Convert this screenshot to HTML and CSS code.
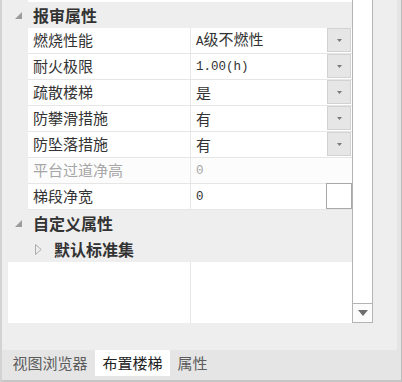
FILE: index.html
```html
<!DOCTYPE html>
<html lang="zh-CN">
<head>
    <meta charset="UTF-8">
    <title>属性</title>
    <link rel="stylesheet" href="styles.css">
</head>
<body>
<div class="window">
    <div class="panel">
        <div class="grid">
            <div class="cut"></div>
            <div class="group">
                <svg class="open" width="7" height="7" viewBox="0 0 7 7"><polygon points="7,0 7,7 0,7"/></svg>
                <span class="group-title">报审属性</span>
            </div>
            <div class="row">
                <div class="name">燃烧性能</div>
                <div class="value"><span><span class="num">A</span>级不燃性</span><span class="drop"><svg width="5" height="3" viewBox="0 0 5 3"><polygon points="0,0 5,0 2.5,3"/></svg></span></div>
            </div>
            <div class="row">
                <div class="name">耐火极限</div>
                <div class="value"><span class="num">1.00(h)</span><span class="drop"><svg width="5" height="3" viewBox="0 0 5 3"><polygon points="0,0 5,0 2.5,3"/></svg></span></div>
            </div>
            <div class="row">
                <div class="name">疏散楼梯</div>
                <div class="value"><span>是</span><span class="drop"><svg width="5" height="3" viewBox="0 0 5 3"><polygon points="0,0 5,0 2.5,3"/></svg></span></div>
            </div>
            <div class="row">
                <div class="name">防攀滑措施</div>
                <div class="value"><span>有</span><span class="drop"><svg width="5" height="3" viewBox="0 0 5 3"><polygon points="0,0 5,0 2.5,3"/></svg></span></div>
            </div>
            <div class="row">
                <div class="name">防坠落措施</div>
                <div class="value"><span>有</span><span class="drop"><svg width="5" height="3" viewBox="0 0 5 3"><polygon points="0,0 5,0 2.5,3"/></svg></span></div>
            </div>
            <div class="row disabled">
                <div class="name">平台过道净高</div>
                <div class="value"><span class="num">0</span></div>
            </div>
            <div class="row">
                <div class="name">梯段净宽</div>
                <div class="value"><span class="num">0</span><span class="edit"></span></div>
            </div>
            <div class="group">
                <svg class="open" width="7" height="7" viewBox="0 0 7 7"><polygon points="7,0 7,7 0,7"/></svg>
                <span class="group-title">自定义属性</span>
            </div>
            <div class="subgroup">
                <svg class="closed" width="7" height="11" viewBox="0 0 7 11"><polygon points="0.5,0.5 6.2,5.5 0.5,10.5"/></svg>
                <span class="group-title">默认标准集</span>
            </div>
            <div class="blank">
                <div class="blank-name"></div>
            </div>
        </div>
        <div class="scrollbar">
            <div class="track"></div>
            <div class="arrow"><svg width="10" height="6" viewBox="0 0 10 6"><polygon points="0,0 10,0 5,6"/></svg></div>
        </div>
    </div>
    <div class="tabs">
        <div class="tab">视图浏览器</div>
        <div class="tab active">布置楼梯</div>
        <div class="tab">属性</div>
    </div>
</div>
</body>
</html>
```

FILE: styles.css
```css
*{
    margin:0;
    padding:0;
    box-sizing:border-box;
}
body{
    font-family:"Noto Sans CJK SC", "Microsoft YaHei", sans-serif;
    background:#e5e5e5;
}
.window{
    width:402px;
    height:382px;
    display:flex;
    flex-direction:column;
    background:#e5e5e5;
    border-left:2px solid #d3d3d3;
    border-right:1px solid #bcbcbc;
    border-bottom:2px solid #c6c6c6;
}
.panel{
    height:350px;
    margin-right:4px;
    padding-bottom:27px;
    background:#eeeeee;
    display:flex;
    align-items:flex-start;
}
.grid{
    width:350px;
    height:323px;
    display:flex;
    flex-direction:column;
    overflow:hidden;
}
.cut{
    height:2px;
    margin-left:26px;
    background:#fff;
    flex:none;
}
.group, .subgroup{
    height:26px;
    flex:none;
    display:flex;
    align-items:center;
    color:#333;
}
.group{
    padding-left:13px;
}
.subgroup{
    padding-left:33px;
}
.group-title{
    font-size:16px;
    font-weight:bold;
    line-height:24px;
    margin-left:11px;
}
.subgroup .group-title{
    margin-left:12px;
}
.open polygon{
    fill:#9c9c9c;
}
.closed polygon{
    fill:none;
    stroke:#acacac;
    stroke-width:1;
}
.row{
    height:26px;
    flex:none;
    margin-left:26px;
    display:flex;
    background:#fff;
    border-bottom:1px solid #e6e6e6;
    font-size:15px;
    color:#333;
}
.name{
    width:163px;
    padding-left:5px;
    line-height:24px;
    border-right:1px solid #e6e6e6;
    white-space:nowrap;
}
.value{
    flex:1;
    display:flex;
    align-items:center;
    padding-left:5px;
    line-height:24px;
}
.num{
    font-family:"Liberation Mono", monospace;
    font-size:12.5px;
}
.disabled{
    color:#a6a6a6;
    background:#fcfcfc;
}
.drop{
    width:24px;
    height:24px;
    margin-left:auto;
    margin-right:1px;
    align-self:flex-start;
    background:#e6e6e6;
    border:1px solid #d2d2d2;
    display:flex;
    align-items:center;
    justify-content:center;
}
.drop polygon{
    fill:#7a7a7a;
}
.edit{
    width:26px;
    height:26px;
    margin-left:auto;
    margin-top:-1px;
    align-self:flex-start;
    background:#fff;
    border:1px solid #a9a9a9;
}
.blank{
    height:61px;
    flex:none;
    margin-left:6px;
    background:#fff;
}
.blank-name{
    width:183px;
    height:100%;
    border-right:1px solid #e6e6e6;
}
.scrollbar{
    width:21px;
    height:323px;
    display:flex;
    flex-direction:column;
    background:#fff;
    border-left:1px solid #b4b4b4;
    border-right:1px solid #b4b4b4;
    border-bottom:1px solid #b4b4b4;
}
.track{
    flex:1;
}
.arrow{
    height:19px;
    border-top:1px solid #b4b4b4;
    background:#fbfbfb;
    display:flex;
    align-items:center;
    justify-content:center;
}
.arrow polygon{
    fill:#6e6e6e;
}
.tabs{
    height:28px;
    display:flex;
    align-items:flex-start;
    padding-left:3px;
}
.tab{
    height:26px;
    padding:0 7.5px;
    line-height:26px;
    font-size:15px;
    color:#5c5c5c;
    white-space:nowrap;
}
.tab.active{
    background:#fff;
    color:#222;
}
```
